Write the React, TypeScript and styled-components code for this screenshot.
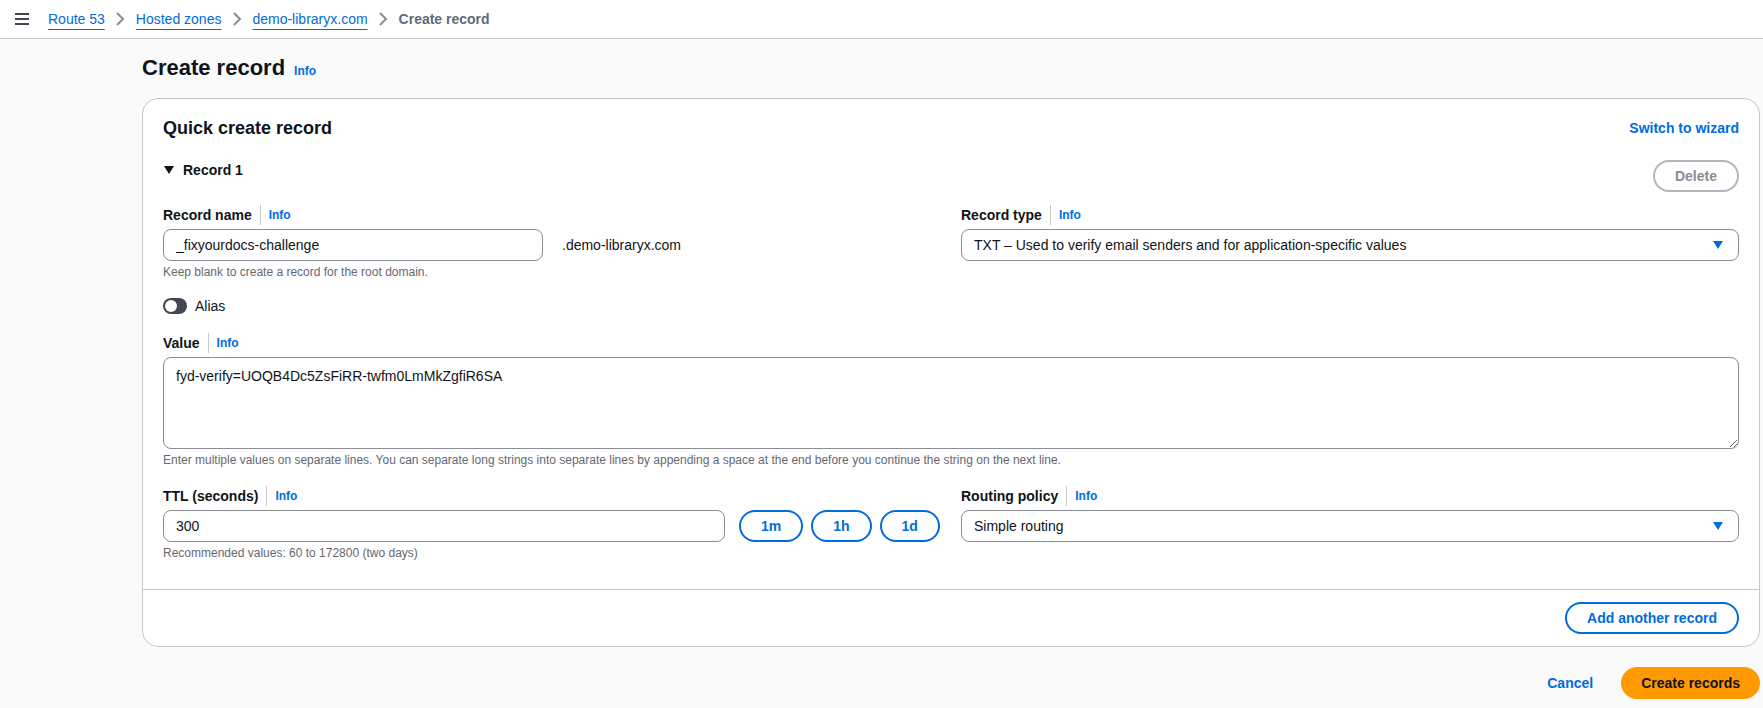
import React from "react";
import styled, { createGlobalStyle, css } from "styled-components";

const GlobalStyle = createGlobalStyle`
  body {
    margin: 0;
    background: #fafafa;
    color: #0f141a;
    font-family: "Liberation Sans", Arial, sans-serif;
    font-size: 14px;
  }
  * { box-sizing: border-box; }
`;

const blue = "#006ce0";

// SECTION Top bar
const TopBar = styled.header`
  height: 39px;
  background: #ffffff;
  border-bottom: 1px solid #c6c6cd;
  display: flex;
  align-items: center;
  padding-left: 15px;
`;

const Crumbs = styled.nav`
  display: flex;
  align-items: center;
  margin-left: 19px;
  font-size: 14px;
  line-height: 20px;
`;

const CrumbLink = styled.a`
  color: ${blue};
  text-decoration: underline;
  text-underline-offset: 5px;
  text-decoration-thickness: 1px;
`;

const CrumbCurrent = styled.span`
  color: #5f6b7a;
  font-weight: 700;
`;

const CrumbSep = styled.span`
  width: 31px;
  display: flex;
  justify-content: center;
`;

// SECTION Page
const Page = styled.main`
  padding: 15px 3px 0 142px;
`;

const TitleRow = styled.div`
  display: flex;
  align-items: baseline;
  gap: 9px;
`;

const Title = styled.h1`
  margin: 0;
  font-size: 22px;
  line-height: 28px;
  font-weight: 700;
`;

const InfoLink = styled.a`
  color: ${blue};
  font-size: 12px;
  font-weight: 700;
`;

const Card = styled.section`
  margin-top: 16px;
  background: #ffffff;
  border: 1px solid #c6c6cd;
  border-radius: 16px;
`;

const CardBody = styled.div`
  padding: 17px 20px 28px;
`;

const CardHead = styled.div`
  display: flex;
  justify-content: space-between;
  align-items: center;
  height: 24px;
`;

const CardTitle = styled.h2`
  margin: 0;
  font-size: 18px;
  line-height: 24px;
  font-weight: 700;
`;

const TextLink = styled.a`
  color: ${blue};
  font-weight: 700;
  font-size: 14px;
`;

const RecordHead = styled.div`
  margin-top: 20px;
  display: flex;
  justify-content: space-between;
  align-items: flex-start;
`;

const Expander = styled.div`
  display: flex;
  align-items: center;
  gap: 9px;
  height: 20px;
  font-weight: 700;
  padding-left: 1px;
`;

const Columns = styled.div<{ $top: number }>`
  display: grid;
  grid-template-columns: 1fr 1fr;
  column-gap: 20px;
  margin-top: ${(p) => p.$top}px;
`;

const Field = styled.div<{ $top?: number }>`
  margin-top: ${(p) => p.$top ?? 0}px;
`;

const LabelRow = styled.div<{ $gap?: number }>`
  display: flex;
  align-items: center;
  height: 22px;
  margin-bottom: ${(p) => p.$gap ?? 4}px;
`;

const Label = styled.span`
  font-weight: 700;
`;

const LabelDivider = styled.span`
  width: 1px;
  height: 20px;
  background: #c6c6cd;
  margin: 0 8px;
`;

const Control = styled.div`
  display: flex;
  align-items: center;
  gap: 14px;
`;

const inputBase = css`
  font-family: inherit;
  font-size: 14px;
  color: #0f141a;
  background: #ffffff;
  border: 1px solid #8c8c94;
  border-radius: 8px;
  padding: 0 12px;
  outline: none;
`;

const Input = styled.input<{ $width: number }>`
  ${inputBase};
  height: 32px;
  width: ${(p) => p.$width}px;
`;

const Suffix = styled.span`
  margin-left: 5px;
`;

const Hint = styled.div`
  margin-top: 3px;
  font-size: 12px;
  line-height: 16px;
  color: #656871;
`;

const Select = styled.div`
  ${inputBase};
  height: 32px;
  display: flex;
  align-items: center;
  justify-content: space-between;
  padding-right: 15px;
`;

const AliasRow = styled.label`
  margin-top: 18px;
  display: flex;
  align-items: center;
  gap: 8px;
  height: 16px;
`;

const Switch = styled.span`
  width: 24px;
  height: 16px;
  border-radius: 8px;
  background: #424650;
  display: flex;
  align-items: center;
  padding-left: 2px;
  &::after {
    content: "";
    width: 12px;
    height: 12px;
    border-radius: 50%;
    background: #ffffff;
  }
`;

const TextArea = styled.textarea`
  ${inputBase};
  display: block;
  width: 100%;
  height: 92px;
  padding: 8px 12px;
  line-height: 20px;
  resize: vertical;
`;

const Pills = styled.div`
  display: flex;
  gap: 8px;
`;

type Variant = "normal" | "disabled" | "primary" | "link";

const Pill = styled.button<{ $variant?: Variant }>`
  height: 32px;
  padding: 0 20px;
  border-radius: 20px;
  border: 2px solid ${blue};
  background: #ffffff;
  color: ${blue};
  font-family: inherit;
  font-size: 14px;
  font-weight: 700;
  white-space: nowrap;
  cursor: pointer;
  ${(p) =>
    p.$variant === "disabled" &&
    css`
      border-color: #b4b4bb;
      color: #8c8c94;
    `}
  ${(p) =>
    p.$variant === "primary" &&
    css`
      padding: 0 18px;
      border-color: #ff9900;
      background: #ff9900;
      color: #0f141a;
    `}
  ${(p) =>
    p.$variant === "link" &&
    css`
      padding: 0 18px;
      border-color: transparent;
      background: transparent;
    `}
`;

const CardFooter = styled.div`
  border-top: 1px solid #c6c6cd;
  padding: 12px 20px;
  display: flex;
  justify-content: flex-end;
`;

const Actions = styled.div`
  margin-top: 20px;
  display: flex;
  justify-content: flex-end;
  gap: 8px;
`;

function Menu() {
  return (
    <svg width="14" height="12" viewBox="0 0 14 12">
      <g stroke="#424650" strokeWidth="2">
        <line x1="0" y1="1" x2="14" y2="1" />
        <line x1="0" y1="6" x2="14" y2="6" />
        <line x1="0" y1="11" x2="14" y2="11" />
      </g>
    </svg>
  );
}

function Chevron() {
  return (
    <svg width="10" height="16" viewBox="0 0 10 16">
      <polyline points="2,2 8,8 2,14" fill="none" stroke="#8c8c94" strokeWidth="2" />
    </svg>
  );
}

function Caret({ color = blue }: { color?: string }) {
  return (
    <svg width="10" height="8" viewBox="0 0 10 8">
      <polygon points="0,0 10,0 5,8" fill={color} />
    </svg>
  );
}

function FieldLabel({ children, gap }: { children: React.ReactNode; gap?: number }) {
  return (
    <LabelRow $gap={gap}>
      <Label>{children}</Label>
      <LabelDivider />
      <InfoLink>Info</InfoLink>
    </LabelRow>
  );
}

export default function App() {
  return (
    <>
      <GlobalStyle />
      <TopBar>
        <Menu />
        <Crumbs>
          <CrumbLink>Route 53</CrumbLink>
          <CrumbSep>
            <Chevron />
          </CrumbSep>
          <CrumbLink>Hosted zones</CrumbLink>
          <CrumbSep>
            <Chevron />
          </CrumbSep>
          <CrumbLink>demo-libraryx.com</CrumbLink>
          <CrumbSep>
            <Chevron />
          </CrumbSep>
          <CrumbCurrent>Create record</CrumbCurrent>
        </Crumbs>
      </TopBar>

      <Page>
        <TitleRow>
          <Title>Create record</Title>
          <InfoLink>Info</InfoLink>
        </TitleRow>

        <Card>
          <CardBody>
            <CardHead>
              <CardTitle>Quick create record</CardTitle>
              <TextLink>Switch to wizard</TextLink>
            </CardHead>

            <RecordHead>
              <Expander>
                <Caret color="#0f141a" />
                Record 1
              </Expander>
              <Pill $variant="disabled">Delete</Pill>
            </RecordHead>

            {/* SECTION Name + type */}
            <Columns $top={12}>
              <Field>
                <FieldLabel gap={3}>Record name</FieldLabel>
                <Control>
                  <Input $width={380} defaultValue="_fixyourdocs-challenge" />
                  <Suffix>.demo-libraryx.com</Suffix>
                </Control>
                <Hint>Keep blank to create a record for the root domain.</Hint>
              </Field>
              <Field>
                <FieldLabel gap={3}>Record type</FieldLabel>
                <Select>
                  <span>TXT – Used to verify email senders and for application-specific values</span>
                  <Caret />
                </Select>
              </Field>
            </Columns>

            <AliasRow>
              <Switch />
              Alias
            </AliasRow>

            {/* SECTION Value */}
            <Field $top={18}>
              <FieldLabel gap={3}>Value</FieldLabel>
              <TextArea defaultValue="fyd-verify=UOQB4Dc5ZsFiRR-twfm0LmMkZgfiR6SA" />
              <Hint>
                Enter multiple values on separate lines. You can separate long strings into separate lines by
                appending a space at the end before you continue the string on the next line.
              </Hint>
            </Field>

            {/* SECTION TTL + routing */}
            <Columns $top={17}>
              <Field>
                <FieldLabel gap={3}>TTL (seconds)</FieldLabel>
                <Control>
                  <Input $width={562} defaultValue="300" />
                  <Pills>
                    <Pill>1m</Pill>
                    <Pill>1h</Pill>
                    <Pill>1d</Pill>
                  </Pills>
                </Control>
                <Hint>Recommended values: 60 to 172800 (two days)</Hint>
              </Field>
              <Field>
                <FieldLabel gap={3}>Routing policy</FieldLabel>
                <Select>
                  <span>Simple routing</span>
                  <Caret />
                </Select>
              </Field>
            </Columns>
          </CardBody>
          <CardFooter>
            <Pill>Add another record</Pill>
          </CardFooter>
        </Card>

        <Actions>
          <Pill $variant="link">Cancel</Pill>
          <Pill $variant="primary">Create records</Pill>
        </Actions>
      </Page>
    </>
  );
}
